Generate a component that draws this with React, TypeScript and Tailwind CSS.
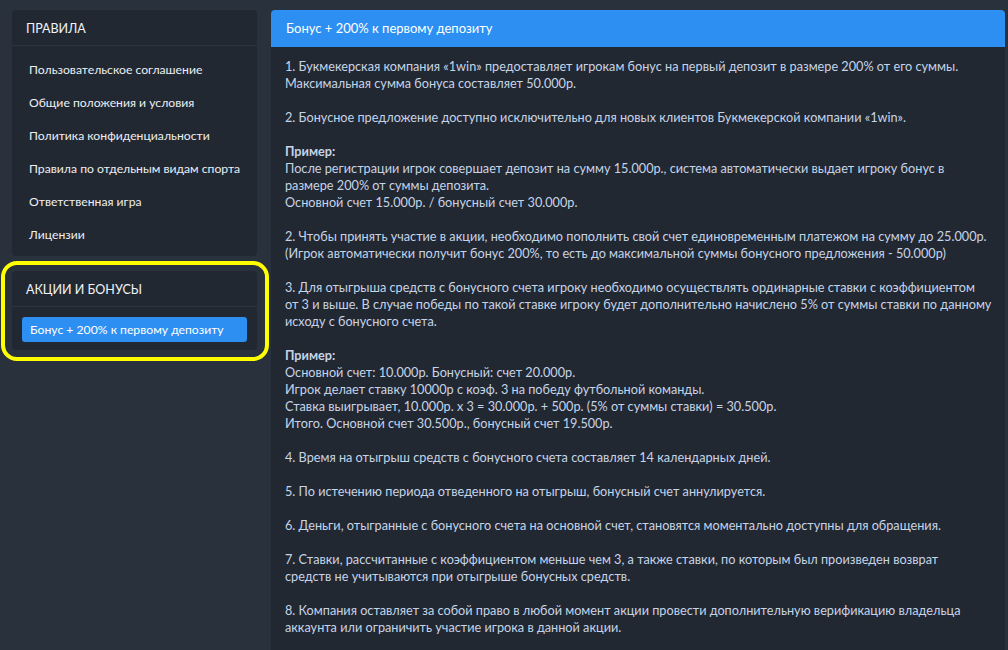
import React from "react";

const rules = [
  "Пользовательское соглашение",
  "Общие положения и условия",
  "Политика конфиденциальности",
  "Правила по отдельным видам спорта",
  "Ответственная игра",
  "Лицензии",
];

export default function App() {
  return (
    <div
      className="relative flex min-h-[650px] w-full gap-[14px] bg-[#29313d] pl-[12px] pr-[3px] pt-[10px]"
      style={{ fontFamily: "Lato, 'Noto Sans', sans-serif" }}
    >
      <aside className="flex w-[245px] shrink-0 flex-col gap-[15px]">
        <div className="rounded-[4px] bg-[#222831] pb-[6px]">
          <div className="flex h-[36px] items-center border-b border-[#2d343e] px-[14px] pt-[3px] text-[12.5px] text-[#f1f4f8]">
            ПРАВИЛА
          </div>
          <ul className="pt-[6px]">
            {rules.map((r) => (
              <li
                key={r}
                className="flex h-[33px] items-center whitespace-nowrap px-[17px] pt-[3px] text-[12.2px] text-[#eceff4]"
              >
                {r}
              </li>
            ))}
          </ul>
        </div>
        <div className="rounded-[4px] bg-[#222831] pb-[8px]">
          <div className="flex h-[36px] items-center border-b border-[#2d343e] px-[14px] pt-[4px] text-[12.5px] text-[#f1f4f8]">
            АКЦИИ И БОНУСЫ
          </div>
          <div className="px-[10px] pt-[10px]">
            <div className="flex h-[25px] items-center whitespace-nowrap rounded-[3px] bg-[#2d8ff1] px-[8px] pt-[2px] text-[12.2px] text-white">
              Бонус + 200% к первому депозиту
            </div>
          </div>
        </div>
      </aside>

      <main className="flex-1 overflow-hidden rounded-t-[4px] bg-[#222831]">
        <div className="flex h-[37px] items-center bg-[#2d8ff1] px-[15px] pt-[1px] text-[13px] text-white">
          Бонус + 200% к первому депозиту
        </div>
        <div className="whitespace-nowrap px-[14px] pb-[14px] pt-[11px] text-[12.7px] leading-[17px] text-[#c6d4e8]">
          <p>
            1. Букмекерская компания «1win» предоставляет игрокам бонус на первый депозит в размере 200% от его суммы.
            <br />
            Максимальная сумма бонуса составляет 50.000р.
          </p>
          <br />
          <p>2. Бонусное предложение доступно исключительно для новых клиентов Букмекерской компании «1win».</p>
          <br />
          <p>
            <b className="font-bold">Пример:</b>
            <br />
            После регистрации игрок совершает депозит на сумму 15.000р., система автоматически выдает игроку бонус в
            <br />
            размере 200% от суммы депозита.
            <br />
            Основной счет 15.000р. / бонусный счет 30.000р.
          </p>
          <br />
          <p>
            2. Чтобы принять участие в акции, необходимо пополнить свой счет единовременным платежом на сумму до 25.000р.
            <br />
            (Игрок автоматически получит бонус 200%, то есть до максимальной суммы бонусного предложения - 50.000р)
          </p>
          <br />
          <p>
            3. Для отыгрыша средств с бонусного счета игроку необходимо осуществлять ординарные ставки с коэффициентом
            <br />
            от 3 и выше. В случае победы по такой ставке игроку будет дополнительно начислено 5% от суммы ставки по данному
            <br />
            исходу с бонусного счета.
          </p>
          <br />
          <p>
            <b className="font-bold">Пример:</b>
            <br />
            Основной счет: 10.000р. Бонусный: счет 20.000р.
            <br />
            Игрок делает ставку 10000р с коэф. 3 на победу футбольной команды.
            <br />
            Ставка выигрывает, 10.000р. x 3 = 30.000р. + 500р. (5% от суммы ставки) = 30.500р.
            <br />
            Итого. Основной счет 30.500р., бонусный счет 19.500р.
          </p>
          <br />
          <p>4. Время на отыгрыш средств с бонусного счета составляет 14 календарных дней.</p>
          <br />
          <p>5. По истечению периода отведенного на отыгрыш, бонусный счет аннулируется.</p>
          <br />
          <p>6. Деньги, отыгранные с бонусного счета на основной счет, становятся моментально доступны для обращения.</p>
          <br />
          <p>
            7. Ставки, рассчитанные с коэффициентом меньше чем 3, а также ставки, по которым был произведен возврат
            <br />
            средств не учитываются при отыгрыше бонусных средств.
          </p>
          <br />
          <p>
            8. Компания оставляет за собой право в любой момент акции провести дополнительную верификацию владельца
            <br />
            аккаунта или ограничить участие игрока в данной акции.
          </p>
        </div>
      </main>

      <div className="pointer-events-none absolute left-[1px] top-[261px] h-[100px] w-[268px] rounded-[16px] border-[4px] border-[#ffff00]" />
    </div>
  );
}
